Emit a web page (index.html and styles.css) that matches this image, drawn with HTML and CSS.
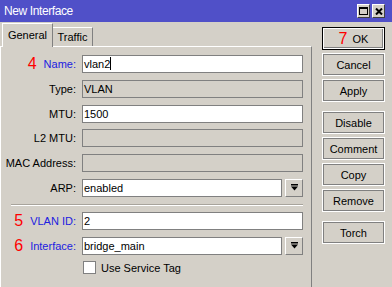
FILE: index.html
```html
<!DOCTYPE html>
<html lang="en">
<head>
  <meta charset="UTF-8" />
  <title>New Interface</title>
  <link rel="stylesheet" href="styles.css">
</head>
<body>

  <div class="window">
    <!-- title bar -->
    <div class="titlebar">
      <span class="title">New Interface</span>
      <div class="winbtns">
        <span class="winbtn">
          <svg width="9" height="8" viewBox="0 0 9 8"><rect x="0.5" y="0.5" width="8" height="7" fill="none" stroke="#000"/><rect x="0" y="0" width="9" height="2" fill="#000"/></svg>
        </span>
        <span class="winbtn">
          <svg width="8" height="7" viewBox="0 0 8 7"><path d="M1 0.5 L7 6.5 M7 0.5 L1 6.5" stroke="#000" stroke-width="2"/></svg>
        </span>
      </div>
    </div>

    <div class="main">
      <div class="tabbox">
        <div class="tabs">
          <div class="tab active">General</div>
          <div class="tab">Traffic</div>
        </div>

        <div class="panel">
          <div class="row">
            <div class="lbl hl"><span class="num">4</span>Name:</div>
            <div class="field">vlan2<span class="caret"></span></div>
          </div>
          <div class="row">
            <div class="lbl">Type:</div>
            <div class="field off">VLAN</div>
          </div>
          <div class="row">
            <div class="lbl">MTU:</div>
            <div class="field">1500</div>
          </div>
          <div class="row">
            <div class="lbl">L2 MTU:</div>
            <div class="field off"></div>
          </div>
          <div class="row">
            <div class="lbl">MAC Address:</div>
            <div class="field off"></div>
          </div>
          <div class="row">
            <div class="lbl">ARP:</div>
            <div class="field">enabled</div>
            <span class="drop">
              <svg width="7" height="7" viewBox="0 0 7 7"><rect x="0" y="0" width="7" height="1.5" fill="#000"/><polygon points="0,2.5 7,2.5 3.5,6.5" fill="#000"/></svg>
            </span>
          </div>

          <div class="sep"></div>

          <div class="row">
            <div class="lbl hl"><span class="num">5</span>VLAN ID:</div>
            <div class="field">2</div>
          </div>
          <div class="row">
            <div class="lbl hl"><span class="num">6</span>Interface:</div>
            <div class="field">bridge_main</div>
            <span class="drop">
              <svg width="7" height="7" viewBox="0 0 7 7"><rect x="0" y="0" width="7" height="1.5" fill="#000"/><polygon points="0,2.5 7,2.5 3.5,6.5" fill="#000"/></svg>
            </span>
          </div>
          <div class="check-row">
            <span class="checkbox"></span>
            <span>Use Service Tag</span>
          </div>
        </div>
      </div>

      <!-- right buttons -->
      <div class="actions">
        <button class="btn default"><span class="num">7</span>OK</button>
        <button class="btn">Cancel</button>
        <button class="btn">Apply</button>
        <button class="btn gap">Disable</button>
        <button class="btn">Comment</button>
        <button class="btn">Copy</button>
        <button class="btn">Remove</button>
        <button class="btn gap">Torch</button>
      </div>
    </div>
  </div>

</body>
</html>
```

FILE: styles.css
```css
* { margin: 0; padding: 0; box-sizing: border-box; }

body {
  width: 392px;
  height: 287px;
  overflow: hidden;
  background-color: #d4d0c8;
  font-family: "Liberation Sans", Arial, sans-serif;
  font-size: 11px;
  color: #000;
}

/* title bar */
.titlebar {
  height: 22px;
  background-color: #5050c8;
  display: flex;
  align-items: center;
  justify-content: space-between;
  padding: 0 7px 0 4px;
}
.title {
  color: #fff;
  font-size: 12px;
  letter-spacing: -0.4px;
}
.winbtns { display: flex; gap: 2px; }
.winbtn {
  width: 13px;
  height: 14px;
  background-color: #d4d0c8;
  border: 1px solid;
  border-color: #fff #404040 #404040 #fff;
  display: flex;
  justify-content: center;
  align-items: center;
}

.main { display: flex; }

/* tabs */
.tabbox { width: 312px; }
.tabs {
  display: flex;
  align-items: flex-end;
  height: 24px;
  padding-left: 2px;
}
.tab {
  width: 40px;
  height: 19px;
  border-top: 1px solid #fff;
  border-right: 1px solid #808080;
  padding-top: 3px;
  text-align: center;
}
.tab.active {
  position: relative;
  z-index: 1;
  width: 51px;
  height: 24px;
  margin-bottom: -1px;
  background-color: #d4d0c8;
  border-left: 1px solid #fff;
  padding-top: 5px;
}

.panel {
  height: 241px;
  border-top: 1px solid #fff;
  border-left: 1px solid #fff;
  border-right: 1px solid #808080;
  padding: 8px 8px 0 0;
}

/* form rows */
.row {
  display: flex;
  align-items: center;
  height: 18px;
  margin-bottom: 6.8px;
}
.lbl {
  width: 75px;
  margin-right: 6px;
  display: flex;
  justify-content: flex-end;
  align-items: center;
  white-space: nowrap;
}
.lbl.hl { color: #2020e0; }
.num {
  color: #ff0000;
  font-size: 16px;
  margin-right: 7px;
  line-height: 1;
}
.field {
  flex: 1;
  height: 18px;
  line-height: 16px;
  background-color: #fff;
  border: 1px solid #808080;
  padding-left: 1px;
  white-space: nowrap;
}
.field.off { background-color: #d4d0c8; }
.caret {
  display: inline-block;
  width: 1px;
  height: 13px;
  background-color: #000;
  vertical-align: -2px;
}
.drop {
  width: 18px;
  height: 18px;
  margin-left: 3px;
  border: 1px solid;
  border-color: #fff #808080 #808080 #fff;
  display: flex;
  justify-content: center;
  align-items: center;
}

.sep {
  margin: 2px 0 6px 10px;
  height: 2px;
  border-top: 1px solid #a8a49c;
  border-bottom: 1px solid #fff;
}

.check-row {
  display: flex;
  align-items: center;
  gap: 5px;
  margin-top: 2px;
  padding-left: 82px;
}
.checkbox {
  width: 13px;
  height: 13px;
  background-color: #fff;
  border: 1px solid #808080;
}

/* buttons */
.actions {
  display: flex;
  flex-direction: column;
  gap: 3px;
  margin-left: 10px;
  padding-top: 5px;
  width: 63px;
}
.btn {
  height: 23px;
  background-color: #d4d0c8;
  border: 1px solid #fff;
  box-shadow: inset 0 0 0 1px #808080;
  font-family: inherit;
  font-size: 11px;
  color: #000;
  display: flex;
  justify-content: center;
  align-items: center;
}
.btn.gap { margin-top: 6px; }
.btn.default {
  border: 1px solid #000;
  box-shadow: inset 0 0 0 1px #fff, inset -1px -1px 0 1px #808080;
}
.btn.default .num { margin-right: 5px; }
```
